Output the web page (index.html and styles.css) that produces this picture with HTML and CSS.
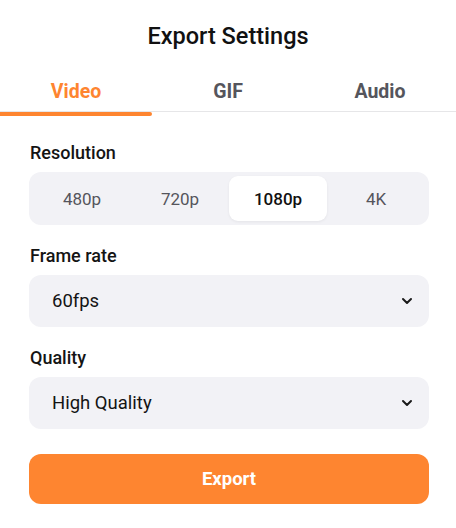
FILE: index.html
```html
<!DOCTYPE html>
<html lang="en">
<head>
<meta charset="utf-8">
<title>Export Settings</title>
<link rel="stylesheet" href="styles.css">
</head>
<body>
<div class="panel">
  <h1 class="title">Export Settings</h1>
  <nav class="tabs">
    <div class="tab active">Video</div>
    <div class="tab">GIF</div>
    <div class="tab">Audio</div>
  </nav>
  <div class="content">
    <div class="field">
      <div class="label">Resolution</div>
      <div class="segmented">
        <div class="seg">480p</div>
        <div class="seg">720p</div>
        <div class="seg selected">1080p</div>
        <div class="seg">4K</div>
      </div>
    </div>
    <div class="field">
      <div class="label">Frame rate</div>
      <div class="select">
        <span class="value">60fps</span>
        <svg class="chev" width="12" height="8" viewBox="0 0 12 8"><path d="M2 2l4 4 4-4" fill="none" stroke="#1a1a1a" stroke-width="2" stroke-linecap="round" stroke-linejoin="round"/></svg>
      </div>
    </div>
    <div class="field">
      <div class="label">Quality</div>
      <div class="select">
        <span class="value">High Quality</span>
        <svg class="chev" width="12" height="8" viewBox="0 0 12 8"><path d="M2 2l4 4 4-4" fill="none" stroke="#1a1a1a" stroke-width="2" stroke-linecap="round" stroke-linejoin="round"/></svg>
      </div>
    </div>
    <button class="export">Export</button>
  </div>
</div>
</body>
</html>
```
FILE: styles.css
```css
* { box-sizing: border-box; }
html, body { margin: 0; padding: 0; background: #ffffff; }
body {
  font-family: Roboto, "Liberation Sans", sans-serif;
  color: #141414;
}
.panel { width: 456px; }
.title {
  margin: 0;
  padding-top: 24px;
  font-size: 23.5px;
  line-height: 24px;
  font-weight: 500;
  text-align: center;
  color: #111;
}
.tabs {
  display: grid;
  grid-template-columns: repeat(3, 1fr);
  margin-top: 23px;
  border-bottom: 1px solid #e6e6e8;
}
.tab {
  position: relative;
  height: 40px;
  line-height: 42px;
  text-align: center;
  font-size: 19.5px;
  font-weight: 700;
  color: #55555c;
}
.tab.active { color: #fe8530; }
.tab.active::after {
  content: "";
  position: absolute;
  left: 0;
  right: 0;
  bottom: -5px;
  height: 4px;
  background: #fe8530;
  border-radius: 0 2px 2px 0;
}
.content {
  padding: 29px 27px 0 29px;
}
.field { margin-bottom: 19px; }
.label {
  font-size: 18px;
  font-weight: 500;
  line-height: 24px;
  padding-left: 1px;
  margin-bottom: 7px;
  color: #141414;
}
.segmented {
  display: grid;
  grid-template-columns: repeat(4, 1fr);
  padding: 4px;
  height: 53px;
  background: #f2f2f6;
  border-radius: 12px;
}
.seg {
  display: flex;
  align-items: center;
  justify-content: center;
  font-size: 17px;
  font-weight: 400;
  color: #55555c;
  border-radius: 9px;
}
.seg.selected {
  background: #fff;
  color: #111;
  font-weight: 500;
  box-shadow: 0 1px 3px rgba(0,0,0,0.06);
}
.select {
  display: flex;
  align-items: center;
  justify-content: space-between;
  height: 52px;
  padding: 0 16px 0 23px;
  background: #f2f2f6;
  border-radius: 12px;
}
.value {
  font-size: 18.5px;
  color: #141414;
}
.chev { display: block; }
.export {
  display: block;
  width: 100%;
  height: 50px;
  margin-top: 25px;
  border: 0;
  border-radius: 12px;
  background: #fe8530;
  color: #fff;
  font-family: inherit;
  font-size: 18.5px;
  font-weight: 700;
}
```
